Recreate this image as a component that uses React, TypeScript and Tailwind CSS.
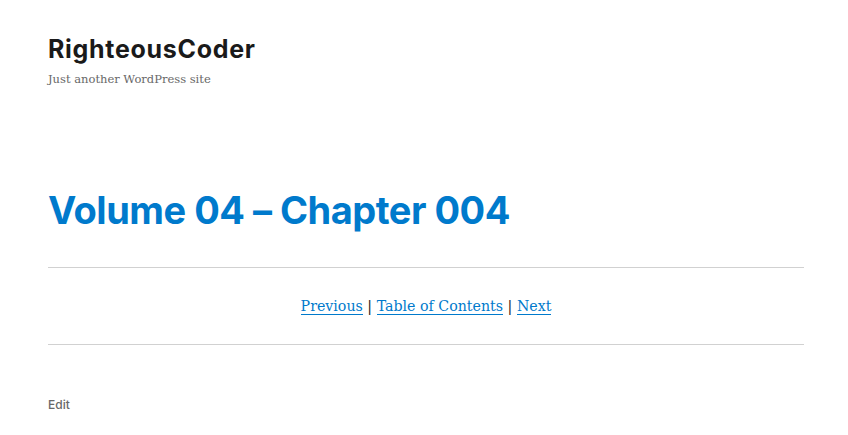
export default function App() {
  const sans = "font-['Inter','Liberation_Sans',sans-serif]";
  const serif = "font-['DejaVu_Serif','Liberation_Serif',serif]";

  return (
    <div className="min-h-[435px] w-[848px] bg-white">
      <div className="ml-[48px] w-[756px]">
        <header className="pt-[33px]">
          <p className={`${sans} text-[25px] leading-[32px] font-bold tracking-[0.7px] text-[#1a1a1a]`}>
            RighteousCoder
          </p>
          <p className={`${serif} mt-[5px] text-[11.5px] leading-[18px] text-[#686868]`}>
            Just another WordPress site
          </p>
        </header>

        <h1 className={`${sans} mt-[97px] text-[38px] leading-[50px] font-bold tracking-[-0.5px] text-[#007acc]`}>
          Volume 04 – Chapter 004
        </h1>

        <div className="mt-[32px] border-t border-[#d1d1d1]" />
        <div className={`${serif} flex h-[76px] items-center justify-center pt-[2px] text-[14.2px] text-[#1a1a1a]`}>
          <p>
            <a href="#" className="text-[#007acc] shadow-[0_1px_0_0_#007acc]">Previous</a>
            {' | '}
            <a href="#" className="text-[#007acc] shadow-[0_1px_0_0_#007acc]">Table of Contents</a>
            {' | '}
            <a href="#" className="text-[#007acc] shadow-[0_1px_0_0_#007acc]">Next</a>
          </p>
        </div>
        <div className="border-t border-[#d1d1d1]" />

        <p className={`${sans} mt-[52px] text-[12px] leading-[16px] font-medium text-[#686868]`}>
          Edit
        </p>
      </div>
    </div>
  );
}
